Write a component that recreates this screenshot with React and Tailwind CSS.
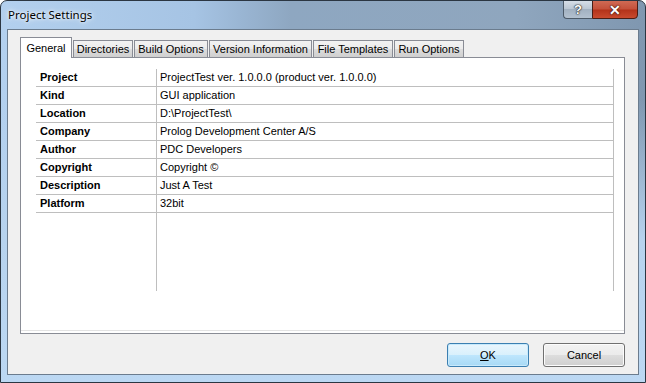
import React from 'react';

const tabs = [
  { label: 'Directories', w: 'w-[60px]' },
  { label: 'Build Options', w: 'w-[74px]' },
  { label: 'Version Information', w: 'w-[103px]' },
  { label: 'File Templates', w: 'w-[80px]' },
  { label: 'Run Options', w: 'w-[70px]' },
];

const rows = [
  ['Project', 'ProjectTest ver. 1.0.0.0 (product ver. 1.0.0.0)'],
  ['Kind', 'GUI application'],
  ['Location', 'D:\\ProjectTest\\'],
  ['Company', 'Prolog Development Center A/S'],
  ['Author', 'PDC Developers'],
  ['Copyright', 'Copyright ©'],
  ['Description', 'Just A Test'],
  ['Platform', '32bit'],
];

const App = () => {
  return (
    <div
      className="w-[646px] h-[383px] flex flex-col rounded-t-[7px] border border-[#2b3642] overflow-hidden bg-[linear-gradient(90deg,#b3d0ee_0%,#a6c4e4_30%,#9ab6d4_37%,#8ea7c1_45%,#8fa6be_80%,#7f97b0_100%)] text-black"
      style={{ fontFamily: '"Liberation Sans", Arial, sans-serif' }}
    >
      {/* title bar */}
      <div className="h-[28px] flex items-start justify-between pl-[7px] pr-[7px] shrink-0">
        <div
          className="pt-[6px] text-[11.5px] leading-[16px]"
          style={{ fontFamily: '"Noto Sans", "Liberation Sans", sans-serif', textShadow: '0 0 6px #fff, 0 0 3px #fff' }}
        >
          Project Settings
        </div>
        <div className="flex -mt-px">
          <div className="w-[29px] h-[19px] rounded-bl-[4px] border border-[#4c5a68] border-r-0 bg-[linear-gradient(180deg,#d6dee7_0%,#bcc8d4_45%,#a2b1c1_50%,#b3c1cf_100%)] flex items-center justify-center">
            <span
              className="text-white text-[13px] font-bold leading-none"
              style={{ textShadow: '0 0 1px #222, 0 0 1px #222, 0 0 2px #333' }}
            >
              ?
            </span>
          </div>
          <div className="w-[46px] h-[19px] rounded-br-[4px] border border-[#4a1e16] bg-[#c4452c] bg-[linear-gradient(180deg,#d06a54_0%,#c4503a_48%,#b3321a_52%,#c94a2e_100%)] flex items-center justify-center">
            <span
              className="text-white text-[14px] font-bold leading-none"
              style={{ textShadow: '0 0 1px #4a1a10, 0 0 1px #4a1a10, 0 0 2px #4a1a10' }}
            >
              ✕
            </span>
          </div>
        </div>
      </div>

      {/* body frame */}
      <div className="flex-1 flex px-[6px] pb-[7px] bg-[linear-gradient(180deg,transparent_0%,transparent_20%,#b7d3ee_60%,#bcd8f3_100%)]">
        <div className="flex-1 flex flex-col bg-[#f0f0f0] border border-[#6b7c8e] pt-[7px] pl-[12px] pr-[13px] text-[11px]">
          {/* tabs */}
          <div className="flex items-end h-[20px] relative z-10">
            <div className="w-[52px] h-[21px] -mb-px bg-white border border-b-0 border-[#898c95] flex items-start justify-center pt-[2px]">
              General
            </div>
            {tabs.map((t) => (
              <div
                key={t.label}
                className={`${t.w} h-[17px] ml-[1px] border border-b-0 border-[#898c95] bg-[linear-gradient(180deg,#f2f2f2_0%,#ebebeb_50%,#dddddd_51%,#cfcfcf_100%)] flex items-center justify-center`}
              >
                {t.label}
              </div>
            ))}
          </div>

          {/* panel */}
          <div className="h-[277px] bg-white border border-[#898c95] shadow-[inset_0_-2px_0_0_#fff,inset_0_-3px_0_0_#e3e3e3] pl-[15px] pr-[10px] pt-[11px] pb-[42px] flex">
            <div className="flex-1 flex">
              <div className="w-[121px] border-r border-[#bebebe] flex flex-col">
                {rows.map(([k]) => (
                  <div key={k} className="h-[18px] border-b border-[#bebebe] pl-[4px] font-bold leading-[16px]">
                    {k}
                  </div>
                ))}
              </div>
              <div className="flex-1 border-r border-[#bebebe] flex flex-col">
                {rows.map(([k, v]) => (
                  <div key={k} className="h-[18px] border-b border-[#bebebe] pl-[3px] leading-[16px] whitespace-nowrap">
                    {v}
                  </div>
                ))}
              </div>
            </div>
          </div>

          {/* buttons */}
          <div className="flex justify-end gap-[14px] mt-[9px]">
            <button className="w-[82px] h-[24px] rounded-[3px] border border-[#3c7fb1] bg-[linear-gradient(180deg,#eaf6fd_0%,#d9f0fc_50%,#bee6fd_51%,#a7d9f5_100%)] shadow-[inset_0_0_0_1px_#c8eafc] text-[11px]">
              <span className="underline">O</span>K
            </button>
            <button className="w-[82px] h-[24px] rounded-[3px] border border-[#707070] bg-[linear-gradient(180deg,#f2f2f2_0%,#ebebeb_50%,#dddddd_51%,#cfcfcf_100%)] shadow-[inset_0_0_0_1px_#fcfcfc] text-[11px]">
              Cancel
            </button>
          </div>
        </div>
      </div>
    </div>
  );
};

export default App;
